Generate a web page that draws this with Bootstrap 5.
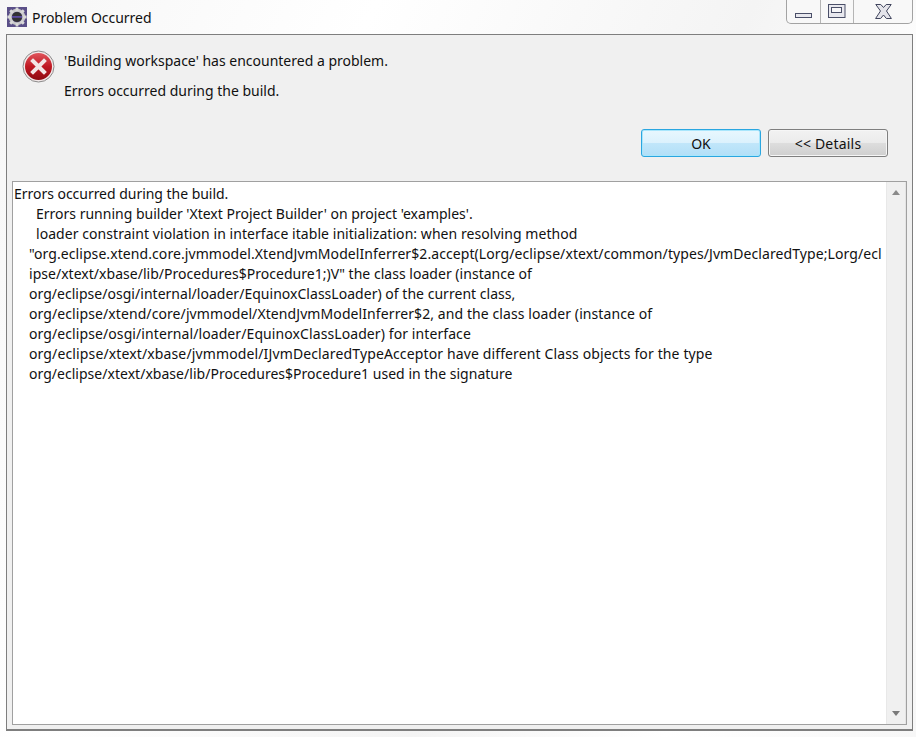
<!DOCTYPE html>
<html lang="en">
<head>
<meta charset="utf-8">
<title>Problem Occurred</title>
<link href="https://cdn.jsdelivr.net/npm/bootstrap@5.3.0/dist/css/bootstrap.min.css" rel="stylesheet">
<style>
html,body{height:100%;overflow:hidden}
body{background:#fbfbfb;font-family:"Noto Sans",sans-serif;font-size:14px;color:#111;}
.win-frame{height:737px;padding:0 3px 6px 6px;background:linear-gradient(115deg,#f6f6f6 0,#fff 30%,#f4f4f4 60%,#fff 80%,#f7f7f7 100%)}
.title-row{height:34px;padding-left:1px}
.title-text{font-size:14px;line-height:34px;margin-left:5px;padding-top:1px;letter-spacing:-.04px}
.win-ctrls{width:127px;height:24px;border:1px solid #a3a3a3;border-top:0;border-radius:0 0 5px 5px;background:#f8f8f8}
.win-ctrl{height:23px;border-right:1px solid #b5b5b5}
.win-ctrl:last-child{border-right:0}
.ctl-a{width:34px}.ctl-b{width:33px}.ctl-c{width:58px}
.client{flex:1;min-height:0;background:#f0f0f0;border:1px solid #7e7e7e;border-bottom-width:2px;padding-right:5px}
.msg-head{height:94px;padding:15px 0 0 15px}
.msg-lines{margin-left:9px;line-height:20px;padding-top:1px}
.msg-lines p{margin:0 0 10px;white-space:nowrap;font-size:14px}
.btn-row{height:49px;gap:7px;padding-right:19px}
.dlg-btn{width:120px;height:28px;padding:0;font-size:14px;line-height:27px;color:#111;border-radius:3px}
.dlg-ok{border:1px solid #2aa6e0;background:linear-gradient(#e8f7fe 0,#dcf2fd 48%,#c0e6fa 52%,#b2dff7 100%);box-shadow:inset 0 0 0 1px #a8e6fc}
.dlg-det{border:1px solid #7f7f7f;background:linear-gradient(#f2f2f2 0,#ebebeb 48%,#dddddd 52%,#cfcfcf 100%);box-shadow:inset 0 0 0 1px #f6f6f6;letter-spacing:.2px}
.detail-box{flex:1;min-height:0;margin:3px 0 4px 5px;background:#fff;border:1px solid #a0a0a0}
.detail-text{flex:1;padding:2px 0 0 1px;line-height:20px;font-size:14px;white-space:nowrap;overflow:hidden}
.detail-text div{height:20px}
.ind-a{padding-left:22px}
.ind-b{padding-left:15px}
.sp-1{letter-spacing:-.03px}.sp-3{letter-spacing:.057px}.sp-4{letter-spacing:.08px}
.sp-5{letter-spacing:.026px}.sp-7{letter-spacing:.09px}.sp-9{letter-spacing:.13px}
.vscroll{width:20px;background:#f0f0f0;border-left:1px solid #e8e8e8;border-right:1px solid #e4e4e4}
.arrow-up,.arrow-down{width:0;height:0;border-left:4px solid transparent;border-right:4px solid transparent}
.arrow-up{border-bottom:5px solid #8a8a8a;margin-top:8px}
.arrow-down{border-top:5px solid #7a7a7a;margin-bottom:8px}
</style>
</head>
<body>
<div class="win-frame d-flex flex-column">
  <div class="title-row d-flex justify-content-between align-items-start flex-shrink-0">
    <div class="d-flex align-items-center" style="height:34px">
      <svg width="20" height="20" viewBox="0 0 20 20" aria-hidden="true">
        <rect width="20" height="20" fill="#5a4f88"/>
        <circle cx="10" cy="10" r="6.8" fill="none" stroke="#c8c8c8" stroke-width="3"/>
        <g stroke="#d8d8d8" stroke-width="2.8">
          <path d="M10 .4v3.6M10 16v3.6M.4 10H4M16 10h3.600M3.200 3.200l2.600 2.600M14.200 14.200l2.600 2.600M3.200 16.800l2.600-2.600M14.200 5.800l2.600-2.600"/>
        </g>
        <circle cx="10" cy="10" r="5" fill="#333"/>
        <rect x="5" y="9" width="10" height="1.800" fill="#5a4aa0"/>
      </svg>
      <span class="title-text">Problem Occurred</span>
    </div>
    <div class="win-ctrls d-flex">
      <div class="win-ctrl ctl-a d-flex align-items-end justify-content-center pb-1">
        <svg width="18" height="6" viewBox="0 0 18 6" aria-hidden="true"><rect x=".5" y=".5" width="16" height="4" fill="#e8e8ee" stroke="#4a4f68"/></svg>
      </div>
      <div class="win-ctrl ctl-b d-flex align-items-center justify-content-center">
        <svg width="18" height="15" viewBox="0 0 18 15" aria-hidden="true"><rect x=".5" y=".5" width="16.500" height="13" fill="#e8e8ee" stroke="#4a4f68"/><rect x="3.500" y="3.500" width="10" height="5" fill="#f6f6f8" stroke="#4a4f68"/></svg>
      </div>
      <div class="win-ctrl ctl-c d-flex align-items-center justify-content-center">
        <svg width="17" height="15" viewBox="0 0 17 15" aria-hidden="true"><path d="M.8.500h5l2.700 3 2.700-3h5L11.500 7l4.900 7.500h-5l-2.900-3.500-2.900 3.500h-5L5.500 7z" fill="#e4e4ea" stroke="#3f445c"/></svg>
      </div>
    </div>
  </div>
  <div class="client d-flex flex-column">
    <div class="msg-head d-flex flex-shrink-0">
      <svg width="33" height="33" viewBox="0 0 33 33" class="flex-shrink-0" aria-hidden="true">
        <defs>
          <linearGradient id="redg" x1="0" y1="0" x2="0" y2="1"><stop offset="0" stop-color="#e0555c"/><stop offset=".5" stop-color="#c01822"/><stop offset="1" stop-color="#8e0c12"/></linearGradient>
        </defs>
        <circle cx="16.500" cy="16.500" r="15.500" fill="#f2e8e8" stroke="#8b8b8b"/>
        <circle cx="16.500" cy="16.500" r="13.500" fill="url(#redg)"/>
        <path d="M11 11l11 11M22 11L11 22" stroke="#f3e6e6" stroke-width="4" stroke-linecap="square"/>
      </svg>
      <div class="msg-lines">
        <p>'Building workspace' has encountered a problem.</p>
        <p>Errors occurred during the build.</p>
      </div>
    </div>
    <div class="btn-row d-flex justify-content-end align-items-start flex-shrink-0">
      <button type="button" class="btn dlg-btn dlg-ok">OK</button>
      <button type="button" class="btn dlg-btn dlg-det">&lt;&lt; Details</button>
    </div>
    <div class="detail-box d-flex">
      <div class="detail-text">
        <div class="sp-1">Errors occurred during the build.</div>
        <div class="ind-a">Errors running builder 'Xtext Project Builder' on project 'examples'.</div>
        <div class="ind-a sp-3">loader constraint violation in interface itable initialization: when resolving method</div>
        <div class="ind-b sp-4">"org.eclipse.xtend.core.jvmmodel.XtendJvmModelInferrer$2.accept(Lorg/eclipse/xtext/common/types/JvmDeclaredType;Lorg/ecl</div>
        <div class="ind-b sp-5">ipse/xtext/xbase/lib/Procedures$Procedure1;)V" the class loader (instance of</div>
        <div class="ind-b sp-5">org/eclipse/osgi/internal/loader/EquinoxClassLoader) of the current class,</div>
        <div class="ind-b sp-7">org/eclipse/xtend/core/jvmmodel/XtendJvmModelInferrer$2, and the class loader (instance of</div>
        <div class="ind-b sp-7">org/eclipse/osgi/internal/loader/EquinoxClassLoader) for interface</div>
        <div class="ind-b sp-9">org/eclipse/xtext/xbase/jvmmodel/IJvmDeclaredTypeAcceptor have different Class objects for the type</div>
        <div class="ind-b sp-5">org/eclipse/xtext/xbase/lib/Procedures$Procedure1 used in the signature</div>
      </div>
      <div class="vscroll d-flex flex-column justify-content-between align-items-center flex-shrink-0">
        <div class="arrow-up"></div>
        <div class="arrow-down"></div>
      </div>
    </div>
  </div>
</div>
<script src="https://cdn.jsdelivr.net/npm/bootstrap@5.3.0/dist/js/bootstrap.bundle.min.js"></script>
</body>
</html>
